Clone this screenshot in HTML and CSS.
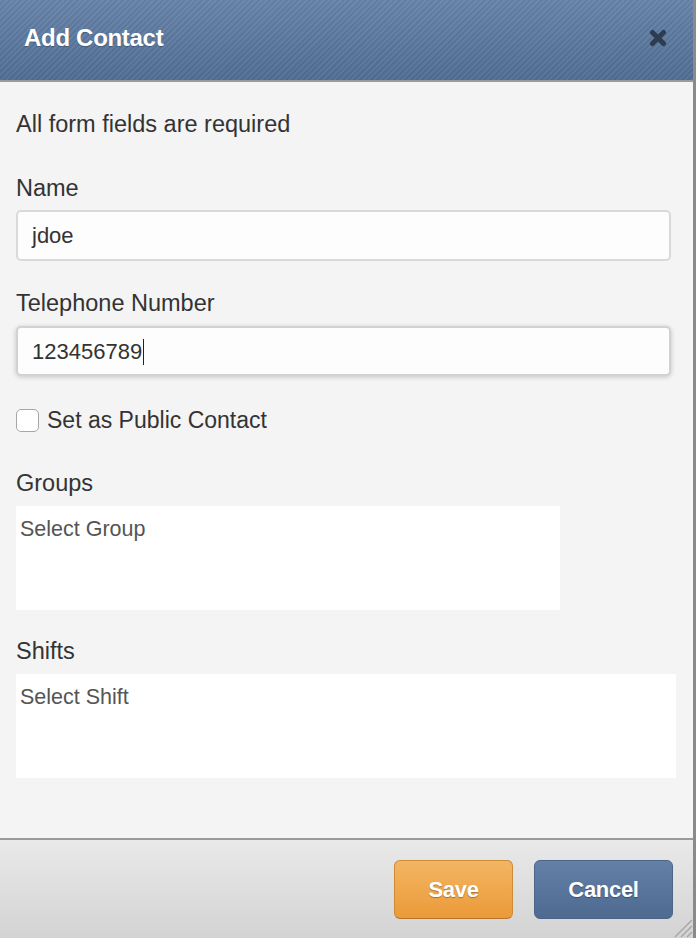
FILE: index.html
```html
<!DOCTYPE html>
<html lang="en">
<head>
<meta charset="utf-8">
<title>Add Contact</title>
<link rel="stylesheet" href="styles.css">
</head>
<body>
<div class="dialog">
  <header class="dlg-header">
    <h1 class="dlg-title">Add Contact</h1>
    <button class="dlg-close" aria-label="Close">
      <svg width="18" height="18" viewBox="0 0 18 18"><path d="M3.5 3.5 L14.5 14.5 M14.5 3.5 L3.5 14.5" stroke="#2e3c4f" stroke-width="5" stroke-linecap="round" fill="none"/></svg>
    </button>
  </header>
  <main class="dlg-body">
    <p class="intro">All form fields are required</p>
    <div class="group group-first">
      <label class="label">Name</label>
      <div class="input">jdoe</div>
    </div>
    <div class="group">
      <label class="label">Telephone Number</label>
      <div class="input input-focus">123456789<span class="caret"></span></div>
    </div>
    <label class="check-row">
      <span class="checkbox"></span>
      <span class="check-label">Set as Public Contact</span>
    </label>
    <div class="group group-wide">
      <label class="label">Groups</label>
      <div class="multi multi-groups">Select Group</div>
    </div>
    <div class="group group-last">
      <label class="label">Shifts</label>
      <div class="multi multi-shifts">Select Shift</div>
    </div>
  </main>
  <footer class="dlg-footer">
    <button class="btn btn-save">Save</button>
    <button class="btn btn-cancel">Cancel</button>
    <svg class="grip" width="22" height="22" viewBox="0 0 22 22"><path d="M21 4 L4 21 M21 10 L10 21 M21 16 L16 21" stroke="#a8a8a8" stroke-width="1.5" fill="none"/></svg>
  </footer>
</div>
</body>
</html>
```
FILE: styles.css
```css
html, body {
  margin: 0;
  padding: 0;
  height: 938px;
  overflow: hidden;
}
body {
  font-family: "Liberation Sans", Arial, Helvetica, sans-serif;
  color: #333;
  background: #f4f4f4;
}
.dialog {
  width: 696px;
  height: 938px;
  box-sizing: border-box;
  border-right: 3px solid #8a8a8a;
  display: flex;
  flex-direction: column;
}
.dlg-header {
  box-sizing: border-box;
  height: 82px;
  flex: 0 0 auto;
  border-bottom: 2px solid #9a9a9a;
  background:
    repeating-linear-gradient(135deg, rgba(255,255,255,0.05) 0 2px, rgba(0,0,0,0.03) 2px 4px),
    linear-gradient(#6783a9, #4f6d93);
  display: flex;
  align-items: center;
  justify-content: space-between;
  padding: 0 26px 4px 24px;
}
.dlg-title {
  margin: 0;
  font-size: 24px;
  font-weight: bold;
  color: #fff;
  letter-spacing: -0.3px;
  text-shadow: 0 1px 1px rgba(0,0,0,0.25);
}
.dlg-close {
  border: 0;
  background: none;
  padding: 0;
  width: 18px;
  height: 18px;
  display: block;
}
.dlg-close svg { display: block; }
.dlg-body {
  flex: 1 1 auto;
  padding: 28px 0 0 16px;
}
.intro {
  margin: 0;
  font-size: 23.5px;
  line-height: 28px;
}
.group { margin-top: 28px; }
.group-first { margin-top: 36px; }
.group-wide { margin-top: 35px; }
.group-last { margin-top: 27px; }
.label {
  display: block;
  font-size: 23.5px;
  line-height: 28px;
  margin-bottom: 9px;
}
.group-first .label { margin-bottom: 8px; }
.input {
  width: 655px;
  height: 51px;
  box-sizing: border-box;
  border: 2px solid #d9d9d9;
  border-radius: 5px;
  background: #fdfdfd;
  font-size: 22px;
  line-height: 47px;
  padding: 0 14px;
  color: #333;
}
.input-focus {
  height: 50px;
  line-height: 47px;
  border-color: #d2d2d2;
  box-shadow: 0 1px 5px rgba(0,0,0,0.2);
}
.caret {
  display: inline-block;
  width: 1px;
  height: 26px;
  background: #222;
  vertical-align: middle;
  margin-left: 1px;
  position: relative;
  top: -1px;
}
.check-row {
  margin-top: 30px;
  display: flex;
  align-items: center;
  height: 28px;
}
.checkbox {
  width: 23px;
  height: 23px;
  box-sizing: border-box;
  border: 1px solid #a6a6a6;
  border-radius: 5px;
  background: #fff;
  margin-right: 8px;
}
.check-label {
  font-size: 23px;
  line-height: 28px;
}
.multi {
  height: 104px;
  background: #fff;
  box-sizing: border-box;
  padding: 10px 4px;
  font-size: 21.5px;
  line-height: 26px;
  color: #555;
}
.multi-groups { width: 544px; }
.multi-shifts { width: 660px; }
.dlg-footer {
  position: relative;
  box-sizing: border-box;
  height: 100px;
  flex: 0 0 auto;
  border-top: 2px solid #9a9a9a;
  background: linear-gradient(#e9e9e9, #d3d3d3);
  display: flex;
  justify-content: flex-end;
  align-items: flex-start;
  gap: 21px;
  padding: 20px 20px 0 0;
}
.btn {
  height: 59px;
  border-radius: 6px;
  font-family: "Liberation Sans", Arial, Helvetica, sans-serif;
  font-size: 22px;
  font-weight: bold;
  color: #fff;
  letter-spacing: -0.3px;
  text-shadow: 0 1px 1px rgba(0,0,0,0.3);
  padding: 0;
  margin: 0;
}
.btn-save {
  width: 119px;
  border: 1px solid #cf8a35;
  border-bottom-color: #b8752a;
  background: linear-gradient(#f3b564, #eb9a38);
}
.btn-cancel {
  width: 139px;
  border: 1px solid #4b6487;
  background: linear-gradient(#6380a6, #4e6a90);
}
.grip {
  position: absolute;
  right: 0;
  bottom: 0;
}
```
